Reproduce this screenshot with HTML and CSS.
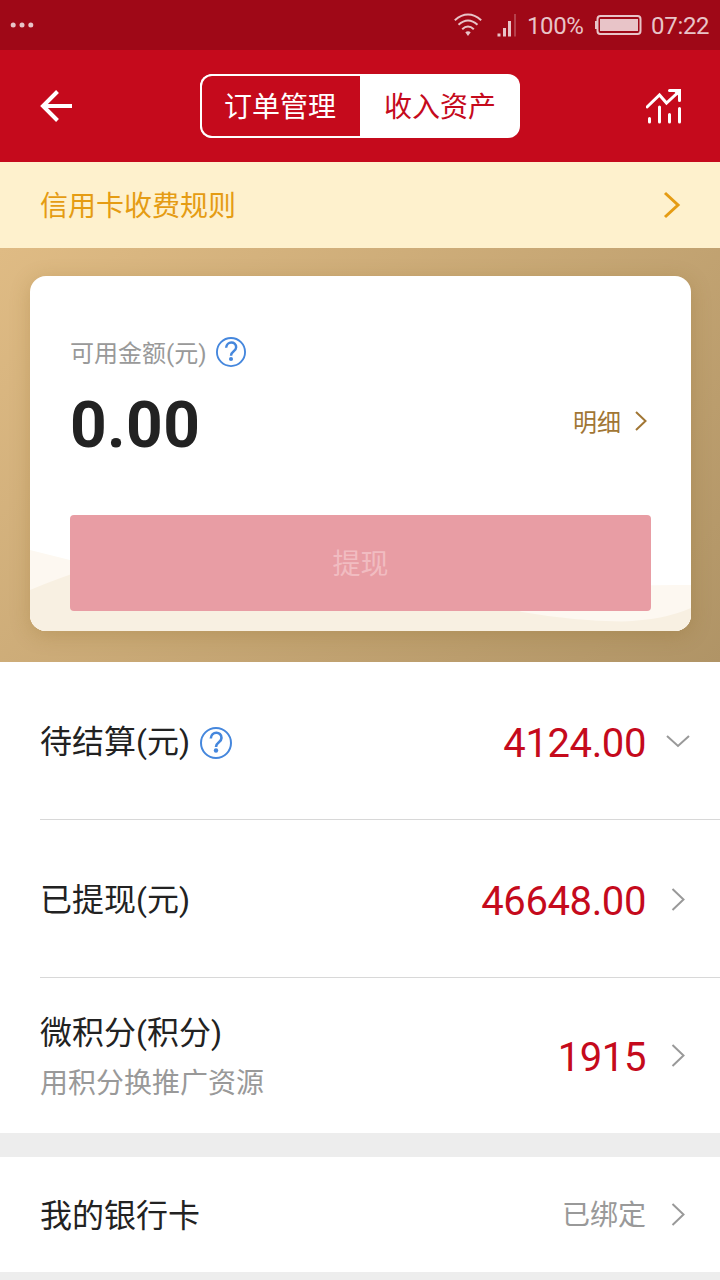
FILE: index.html
```html
<!DOCTYPE html>
<html lang="zh-CN">
<head>
<meta charset="utf-8">
<title>收入资产</title>
<link rel="stylesheet" href="styles.css">
</head>
<body>
<div class="status">
  <svg class="dots" width="26" height="8" viewBox="0 0 26 8"><circle cx="3.2" cy="4" r="2.5"/><circle cx="12" cy="4" r="2.5"/><circle cx="20.8" cy="4" r="2.5"/></svg>
  <div class="status-right">
    <svg class="wifi" width="30" height="24" viewBox="0 0 30 24"><path d="M1.800 7.200Q15-4.200 28.200 7.200M5.500 11.700Q15 3.200 24.500 11.700M9.200 16.200Q15 10.700 20.800 16.200"/><path class="solid" d="M12.300 19.300Q15 17 17.700 19.300L15 23Z"/></svg>
    <svg class="signal" width="20" height="24" viewBox="0 0 20 24"><path d="M.5 20.500h3v3h-3zM6 15h3v8.500H6zM11 8h3v15.500h-3z"/><path opacity=".3" d="M17 1h2v22.500h-2z"/></svg>
    <span class="percent">100%</span>
    <svg class="battery" width="48" height="22" viewBox="0 0 48 22"><rect class="shell" x="2.500" y="2" width="43" height="18" rx="3"/><path d="M0 7h2v8H0zM5 5h38v12H5z"/></svg>
    <span class="clock">07:22</span>
  </div>
</div>
<header class="header">
  <svg class="back" width="34" height="34" viewBox="0 0 34 34"><path d="M18.500 2.500 4 17l14.500 14.500M4 17h29"/></svg>
  <div class="tabs"><span class="tab">订单管理</span><span class="tab active">收入资产</span></div>
  <svg class="chart" width="36" height="36" viewBox="0 0 36 36"><path d="M1 18 13.500 6l7 8L33 2.500M23.500 1.500h10v10"/><path d="M3.500 29.500V33M13.500 18v15M23.500 25.500V33M33.500 19.500V33"/><path class="tip" d="M26.500 1h7.500v7.500z"/></svg>
</header>
<div class="notice">
  <span>信用卡收费规则</span>
  <svg width="18" height="28" viewBox="0 0 18 28"><path d="m2 2 13 12L2 26"/></svg>
</div>
<section class="hero">
  <div class="card">
    <svg class="waves" width="661" height="90" viewBox="0 0 661 90"><path class="pale" d="M0 9 60 24Q270 64 430 60 550 43 661 44V90H0Z"/><path class="sand" d="M0 49Q31 36 60 27 220 15 370 40 450 57 492 71 544 80 592 80.500 634 79 661 67V90H0Z"/></svg>
    <div class="label">
      <span>可用金额(元)</span>
      <svg class="help" width="30" height="30" viewBox="0 0 32 32"><circle class="ring" cx="16" cy="16" r="15"/><path d="M10.800 11.500C11.300 4 21.500 4 21.500 11c0 4.500-5.500 4-5.500 9"/><circle class="point" cx="16" cy="23.500" r="2.200"/></svg>
    </div>
    <div class="balance">
      <strong>0.00</strong>
      <a class="detail"><span>明细</span><svg width="14" height="22" viewBox="0 0 14 22"><path d="m2 2 9.500 9L2 20"/></svg></a>
    </div>
    <button class="withdraw" disabled>提现</button>
  </div>
</section>
<main>
  <div class="row line">
    <span class="title">待结算(元)</span>
    <svg class="help" width="32" height="32" viewBox="0 0 32 32"><circle class="ring" cx="16" cy="16" r="15"/><path d="M10.800 11.500C11.300 4 21.500 4 21.500 11c0 4.500-5.500 4-5.500 9"/><circle class="point" cx="16" cy="23.500" r="2.200"/></svg>
    <span class="amount">4124.00</span>
    <svg class="chevron" width="26" height="26" viewBox="0 0 26 26"><path d="M2 8 13 18 24 8"/></svg>
  </div>
  <div class="row line">
    <span class="title">已提现(元)</span>
    <span class="amount">46648.00</span>
    <svg class="chevron" width="26" height="26" viewBox="0 0 26 26"><path d="m7.500 3 11 10.500L7.500 24"/></svg>
  </div>
  <div class="row points">
    <div class="stack"><span class="title">微积分(积分)</span><span class="sub">用积分换推广资源</span></div>
    <span class="amount">1915</span>
    <svg class="chevron" width="26" height="26" viewBox="0 0 26 26"><path d="m7.500 2 11 10.500L7.500 23"/></svg>
  </div>
  <div class="row bank">
    <span class="title">我的银行卡</span>
    <span class="state">已绑定</span>
    <svg class="chevron" width="26" height="26" viewBox="0 0 26 26"><path d="m7.500 2 11 10.500L7.500 23"/></svg>
  </div>
</main>
</body>
</html>
```
FILE: styles.css
```css
* { box-sizing: border-box; }
body {
  margin: 0;
  height: 1280px;
  overflow: hidden;
  background: #ededed;
  color: #222;
  font-family: Roboto, "Noto Sans CJK SC", sans-serif;
}
svg { display: block; flex: none; fill: none; }
.status {
  height: 50px;
  padding: 0 9px 0 10px;
  display: flex;
  align-items: center;
  justify-content: space-between;
  background: #9f0817;
  color: #e8c4c8;
  font-size: 24px;
  line-height: 50px;
}
.status-right { display: flex; align-items: center; }
.dots, .signal, .battery { fill: #e8c4c8; }
.wifi { stroke: #e8c4c8; stroke-width: 2; margin-right: 14px; }
.wifi .solid { fill: #e8c4c8; stroke: none; }
.signal { margin-right: 10px; }
.percent { width: 57px; margin-right: 11px; padding-top: 2px; letter-spacing: -.4px; }
.battery { margin-right: 8px; }
.battery .shell { fill: none; stroke: #e8c4c8; stroke-width: 2; }
.clock { width: 60px; padding-top: 2px; letter-spacing: -.3px; }
.header {
  height: 112px;
  padding: 0 38px 0 39px;
  display: flex;
  align-items: center;
  background: #c50a1c;
}
.back { stroke: #fff; stroke-width: 4; }
.tabs {
  display: flex;
  width: 320px;
  height: 64px;
  margin-left: 127px;
  border-radius: 12px;
  overflow: hidden;
  background: #fff;
}
.tab { flex: none; width: 160px; text-align: center; color: #fff; font-size: 28px; line-height: 64px; }
.tab:first-child {
  border: 2px solid #fff;
  border-right: 0;
  border-radius: 12px 0 0 12px;
  background: #c50a1c;
  line-height: 60px;
  padding-top: 2px;
  padding-right: 2px;
}
.tab.active { color: #c50a1c; padding-top: 2px; }
.chart { margin-left: auto; margin-top: 2px; stroke: #fff; stroke-width: 3; stroke-linecap: round; }
.chart .tip { fill: #fff; stroke: none; }
.notice {
  height: 86px;
  padding: 0 39px 0 40px;
  display: flex;
  align-items: center;
  justify-content: space-between;
  background: #fef1cd;
  color: #e59c13;
  font-size: 28px;
}
.notice span { padding-bottom: 2px; }
.notice svg { stroke: #e59c13; stroke-width: 3; }
.hero {
  height: 414px;
  padding: 28px 29px 31px 30px;
  background: linear-gradient(135deg, #dfbb84, #b09466);
}
.card {
  position: relative;
  height: 355px;
  padding: 60px 40px 20px;
  border-radius: 16px;
  background: #fff;
  box-shadow: 0 4px 20px rgba(133, 94, 26, .25);
}
.waves { position: absolute; left: 0; bottom: 0; border-radius: 0 0 16px 16px; }
.pale { fill: #fdf8f1; }
.sand { fill: #f8f0e2; }
.label { display: flex; align-items: center; gap: 9px; height: 32px; color: #999; font-size: 24px; }
.label span { padding-bottom: 2px; }
.help { stroke: #4587dd; stroke-width: 2; }
.help path { stroke-width: 2.6; }
.help .point { fill: #4587dd; stroke: none; }
.balance { display: flex; align-items: center; justify-content: space-between; height: 114px; }
.balance strong { font-size: 64px; line-height: 76px; letter-spacing: .4px; padding-top: 2px; }
.detail { display: flex; align-items: center; gap: 13px; margin-right: 3px; padding-bottom: 8px; color: #a17634; font-size: 24px; }
.detail span { padding-bottom: 1px; }
.detail svg { stroke: #a17634; stroke-width: 2; }
.withdraw {
  position: relative;
  display: block;
  width: 100%;
  height: 96px;
  margin-top: 33px;
  padding: 0 0 2px;
  border: 0;
  border-radius: 4px;
  background: #e89da4;
  color: #f1bcc1;
  font: inherit;
  font-size: 28px;
}
.row {
  position: relative;
  display: flex;
  align-items: center;
  height: 158px;
  padding: 0 29px 0 40px;
  background: #fff;
}
.line { background: linear-gradient(#d8d8d8, #d8d8d8) 40px 100% / 100% 1px no-repeat #fff; }
.title { font-size: 32px; padding-bottom: 4px; }
.row .help { margin: 4px 0 0 10px; }
.amount { margin-left: auto; color: #c50a1c; font-size: 40px; padding-top: 4px; letter-spacing: -.4px; }
.row .amount { margin-left: auto; }
.chevron { margin-left: 19px; stroke: #999; stroke-width: 2; }
.points { height: 155px; }
.stack { display: flex; flex-direction: column; padding-top: 4px; }
.stack .title { line-height: 52px; padding-bottom: 0; }
.sub { color: #999; font-size: 28px; line-height: 49px; }
.bank { height: 115px; margin-top: 24px; }
.state { margin-left: auto; color: #999; font-size: 28px; padding-bottom: 4px; }
```
